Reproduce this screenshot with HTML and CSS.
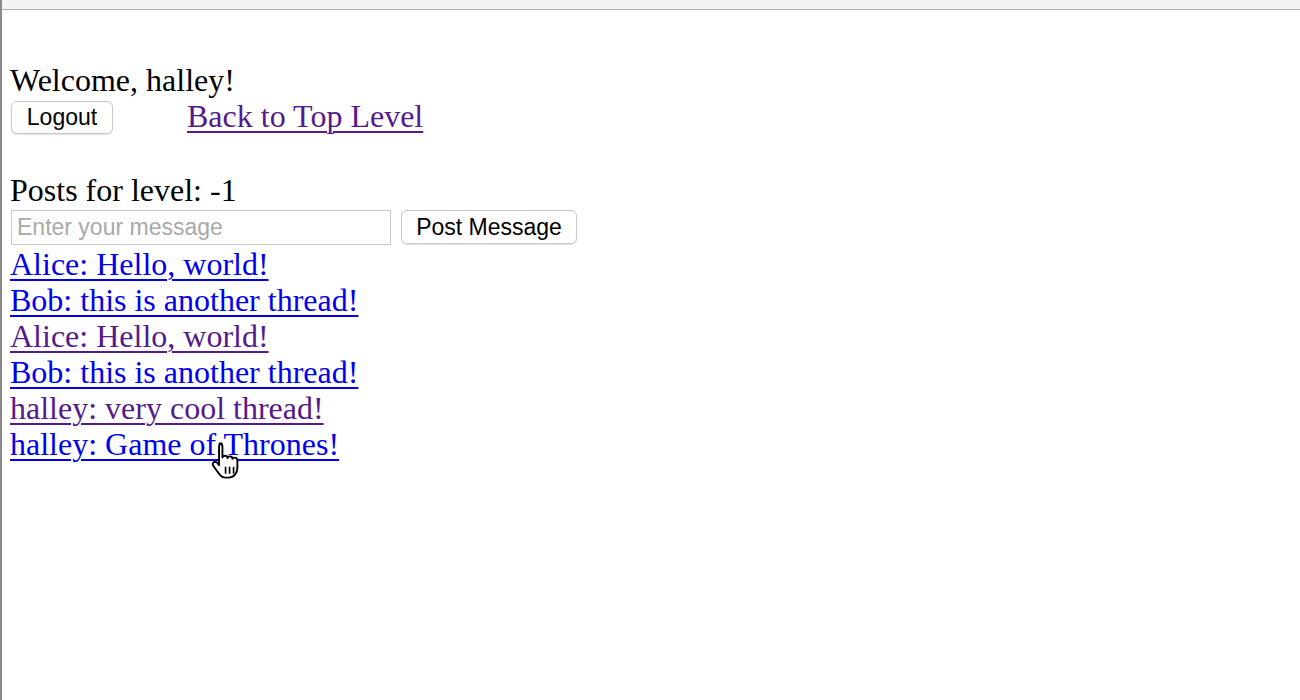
FILE: index.html
```html
<!DOCTYPE html>
<html>
<head>
<meta charset="utf-8">
<link rel="stylesheet" href="styles.css">
</head>
<body>
<div class="topbar"></div>
<div class="page">
  <div class="welcome">Welcome, halley!</div>
  <div class="actions">
    <button class="btn logout">Logout</button>
    <a class="link visited" href="#">Back to Top Level</a>
  </div>
  <div class="posts-title">Posts for level: -1</div>
  <form class="post-form">
    <input class="msg" type="text" placeholder="Enter your message">
    <button class="btn post" type="button">Post Message</button>
  </form>
  <ul class="threads">
    <li><a class="link" href="#">Alice: Hello, world!</a></li>
    <li><a class="link" href="#">Bob: this is another thread!</a></li>
    <li><a class="link visited" href="#">Alice: Hello, world!</a></li>
    <li><a class="link" href="#">Bob: this is another thread!</a></li>
    <li><a class="link visited" href="#">halley: very cool thread!</a></li>
    <li class="hovered"><a class="link" href="#">halley: Game of Thrones!</a>
      <svg class="cursor" width="32" height="40" viewBox="0 0 15 19">
        <path d="M4.5 1.2c.8 0 1.3.6 1.3 1.4v5.2c.2-.5.7-.8 1.2-.8.7 0 1.2.5 1.2 1.1.2-.5.7-.8 1.2-.8.7 0 1.2.5 1.2 1.2.2-.4.6-.6 1.1-.6.7 0 1.2.6 1.2 1.3v3.6c0 2.4-1.6 4.600-4.2 4.6H7.4c-1.6 0-2.6-.9-3.4-2.1L1.4 11.7c-.4-.7-.2-1.4.4-1.7.6-.3 1.2-.1 1.6.4l.8 1.1V2.6c0-.8.5-1.4 1.3-1.4z" fill="#fff" stroke="#000" stroke-width=".9" stroke-linejoin="round"/>
        <path d="M7.3 12.2v3.3M9.2 12.2v3.3M11.1 12.2v3.3" stroke="#000" stroke-width=".8"/>
      </svg>
    </li>
  </ul>
</div>
</body>
</html>
```
FILE: styles.css
```css
html, body {
  margin: 0;
  padding: 0;
  background: #fff;
}
body {
  font-family: "Liberation Serif", "Times New Roman", serif;
  font-size: 32px;
  line-height: 36px;
  color: #000;
  height: 700px;
  overflow: hidden;
  border-left: 2px solid #8a8a8a;
  box-sizing: border-box;
}
.topbar {
  height: 9px;
  background: #f3f3f3;
  border-bottom: 1px solid #b4b4b4;
}
.page {
  padding: 52px 0 0 8px;
}
.welcome {
  height: 36px;
}
.actions {
  display: flex;
  align-items: center;
  gap: 74px;
  height: 36px;
}
.btn {
  font-family: "Liberation Sans", Arial, sans-serif;
  font-size: 23px;
  background: #fff;
  border: 1px solid #cacaca;
  border-radius: 6px;
  box-shadow: 0 1px 1px rgba(0,0,0,0.12);
  color: #000;
  padding: 0;
  height: 33px;
  margin: 0;
}
.logout {
  width: 102px;
  margin-left: 1px;
  margin-top: 2px;
}
.link {
  color: #0000ee;
  text-decoration: underline;
  text-decoration-thickness: 2px;
  text-underline-offset: 4px;
}
.link.visited {
  color: #551a8b;
}
.posts-title {
  margin-top: 38px;
  height: 36px;
}
.post-form {
  display: flex;
  align-items: center;
  gap: 10px;
  height: 38px;
  margin: 0;
}
.msg {
  font-family: "Liberation Sans", Arial, sans-serif;
  font-size: 23px;
  width: 380px;
  height: 35px;
  box-sizing: border-box;
  border: 1px solid #c8c8c8;
  margin: 0 0 0 1px;
  padding: 0 5px;
  color: #000;
}
.msg::placeholder {
  color: #a9a9a9;
}
.post {
  width: 176px;
  height: 34px;
}
.threads {
  list-style: none;
  margin: 0;
  padding: 0;
}
.threads li {
  height: 36px;
}
.hovered {
  position: relative;
}
.cursor {
  position: absolute;
  left: 200px;
  top: 15px;
}
```
